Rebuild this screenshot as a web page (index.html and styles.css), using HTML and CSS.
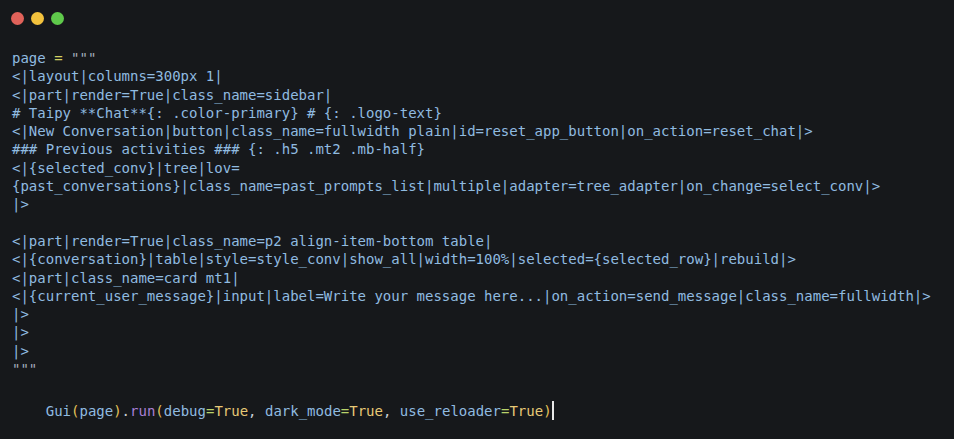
FILE: index.html
```html
<!DOCTYPE html>
<html>
<head>
<meta charset="utf-8">
<link rel="stylesheet" href="styles.css">
</head>
<body>
<div class="window">
  <div class="titlebar">
    <span class="dot red"></span>
    <span class="dot yellow"></span>
    <span class="dot green"></span>
  </div>
<pre class="code">page <span class="op">=</span> <span class="str">"""</span>
&lt;|layout|columns=300px 1|
&lt;|part|render=True|class_name=sidebar|
# Taipy **Chat**{: .color-primary} # {: .logo-text}
&lt;|New Conversation|button|class_name=fullwidth plain|id=reset_app_button|on_action=reset_chat|&gt;
### Previous activities ### {: .h5 .mt2 .mb-half}
&lt;|{selected_conv}|tree|lov=
{past_conversations}|class_name=past_prompts_list|multiple|adapter=tree_adapter|on_change=select_conv|&gt;
|&gt;

&lt;|part|render=True|class_name=p2 align-item-bottom table|
&lt;|{conversation}|table|style=style_conv|show_all|width=100%|selected={selected_row}|rebuild|&gt;
&lt;|part|class_name=card mt1|
&lt;|{current_user_message}|input|label=Write your message here...|on_action=send_message|class_name=fullwidth|&gt;
|&gt;
|&gt;
|&gt;
<span class="str">"""</span></pre>
<pre class="code call">    Gui<span class="paren">(</span>page<span class="paren">)</span><span class="punc">.</span><span class="fn">run</span><span class="paren">(</span>debug<span class="op2">=</span><span class="kw">True</span><span class="punc">, </span>dark_mode<span class="op2">=</span><span class="kw">True</span><span class="punc">, </span>use_reloader<span class="op2">=</span><span class="kw">True</span><span class="paren">)</span><span class="cursor"></span></pre>
</div>
</body>
</html>
```
FILE: styles.css
```css
html, body {
  margin: 0;
  padding: 0;
  background: #16181b;
}
.window {
  width: 954px;
  height: 439px;
  background: #16181b;
  overflow: hidden;
}
.titlebar {
  display: flex;
  gap: 7px;
  padding: 12px 0 0 11px;
  height: 13px;
}
.dot {
  width: 13px;
  height: 13px;
  border-radius: 50%;
  display: block;
}
.red { background: #e0625a; }
.yellow { background: #f3c23d; }
.green { background: #5fc94b; }
.code {
  margin: 24px 0 0 12px;
  font-family: "DejaVu Sans Mono", monospace;
  font-size: 14px;
  line-height: 18.3px;
  color: #90bbe0;
  white-space: pre;
}
.call {
  margin-top: 23px;
}
.op { color: #d2cf62; }
.str { color: #a4adbb; }
.paren { color: #e3c25a; }
.punc { color: #c9ced6; }
.fn { color: #a97fd6; }
.op2 { color: #b9d36a; }
.kw { color: #e8c976; }
.cursor {
  display: inline-block;
  width: 2px;
  height: 19px;
  background: #e8e8e8;
  vertical-align: -4px;
}
```
